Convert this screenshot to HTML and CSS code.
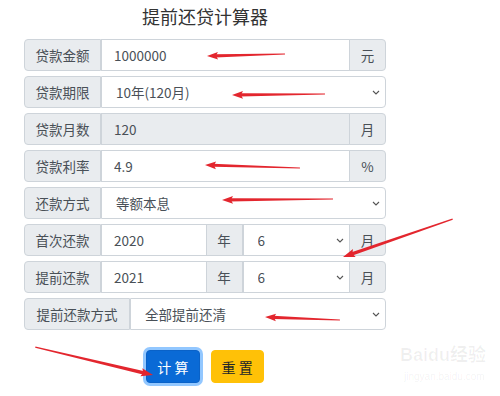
FILE: index.html
```html
<!DOCTYPE html>
<html lang="zh">
<head>
<meta charset="utf-8">
<title>提前还贷计算器</title>
<link rel="stylesheet" href="styles.css">
</head>
<body>
<div class="page">
  <h1 class="title">提前还贷计算器</h1>
  <form class="calc">
    <div class="group">
      <span class="addon label">贷款金额</span>
      <input class="control" value="1000000">
      <span class="addon unit">元</span>
    </div>
    <div class="group">
      <span class="addon label">贷款期限</span>
      <select class="control select"><option>10年(120月)</option></select>
    </div>
    <div class="group">
      <span class="addon label">贷款月数</span>
      <input class="control" value="120" disabled>
      <span class="addon unit">月</span>
    </div>
    <div class="group">
      <span class="addon label">贷款利率</span>
      <input class="control" value="4.9">
      <span class="addon unit">%</span>
    </div>
    <div class="group">
      <span class="addon label">还款方式</span>
      <select class="control select"><option>等额本息</option></select>
    </div>
    <div class="group">
      <span class="addon label">首次还款</span>
      <input class="control" value="2020">
      <span class="addon unit">年</span>
      <select class="control select"><option>6</option></select>
      <span class="addon unit">月</span>
    </div>
    <div class="group">
      <span class="addon label">提前还款</span>
      <input class="control" value="2021">
      <span class="addon unit">年</span>
      <select class="control select"><option>6</option></select>
      <span class="addon unit">月</span>
    </div>
    <div class="group">
      <span class="addon label wide">提前还款方式</span>
      <select class="control select"><option>全部提前还清</option></select>
    </div>
    <div class="actions">
      <button type="button" class="btn primary">计 算</button>
      <button type="button" class="btn warning">重 置</button>
    </div>
  </form>

  <div class="watermark">
    <div class="wm-logo">Baidu经验</div>
    <div class="wm-url">jingyan.baidu.com</div>
  </div>

  <svg class="marks" width="500" height="396" viewBox="0 0 500 396">
    <g fill="#e3262e">
      <g transform="translate(207 56) rotate(-1.47)">
        <polygon points="0,0 11,-3.8 9,0 11,3.8"/>
        <polygon points="8,-1.6 78,-0.5 78,0.5 8,1.6"/>
      </g>
      <g transform="translate(232 95) rotate(-0.6)">
        <polygon points="0,0 11,-3.8 9,0 11,3.8"/>
        <polygon points="8,-1.6 93,-0.5 93,0.5 8,1.6"/>
      </g>
      <g transform="translate(205 165) rotate(1.8)">
        <polygon points="0,0 11,-3.8 9,0 11,3.8"/>
        <polygon points="8,-1.6 95,-0.5 95,0.5 8,1.6"/>
      </g>
      <g transform="translate(222 200) rotate(-0.5)">
        <polygon points="0,0 11,-3.8 9,0 11,3.8"/>
        <polygon points="8,-1.6 111,-0.5 111,0.5 8,1.6"/>
      </g>
      <g transform="translate(343 257) rotate(-19.06)">
        <polygon points="0,0 12,-4.2 10,0 12,4.2"/>
        <polygon points="8,-1.8 116,-0.6 116,0.6 8,1.8"/>
      </g>
      <g transform="translate(265 317) rotate(2.3)">
        <polygon points="0,0 11,-3.8 9,0 11,3.8"/>
        <polygon points="8,-1.6 75,-0.5 75,0.5 8,1.6"/>
      </g>
      <g transform="translate(153 375) rotate(-166.65)">
        <polygon points="0,0 12,-4.2 10,0 12,4.2"/>
        <polygon points="8,-1.8 121,-0.6 121,0.6 8,1.8"/>
      </g>
    </g>
  </svg>
</div>
</body>
</html>
```

FILE: styles.css
```css
* {
  box-sizing: border-box;
}

body {
  margin: 0;
  background: #fff;
  font-family: "Noto Sans CJK SC", "Noto Sans", sans-serif;
  color: #495057;
}

.page {
  position: relative;
  width: 500px;
  height: 396px;
  overflow: hidden;
}

.title {
  margin: 0 0 0 24px;
  padding-top: 4px;
  width: 362px;
  text-align: center;
  font-size: 18px;
  font-weight: normal;
  line-height: 24px;
  color: #333;
}

.calc {
  width: 362px;
  margin: 11px 0 0 24px;
}

.group {
  display: flex;
  height: 32px;
  margin-bottom: 5px;
}

.group > * + * {
  margin-left: -1px;
}

.addon {
  display: flex;
  align-items: center;
  justify-content: center;
  flex: none;
  height: 32px;
  background: #e9ecef;
  border: 1px solid #ced4da;
  font-size: 13.5px;
  color: #495057;
  white-space: nowrap;
}

.label {
  width: 77px;
  border-radius: 4px 0 0 4px;
}

.label.wide {
  width: 106px;
}

.unit {
  width: 37px;
}

.group > :last-child {
  border-radius: 0 4px 4px 0;
}

.control {
  flex: 1;
  min-width: 0;
  height: 32px;
  margin: 0;
  padding: 0 12px;
  border: 1px solid #ced4da;
  background: #fff;
  font-family: inherit;
  font-size: 13.5px;
  color: #495057;
  outline: none;
}

.control:disabled {
  background: #e9ecef;
  color: #495057;
  opacity: 1;
}

.select {
  -webkit-appearance: none;
  appearance: none;
  padding-left: 14px;
  background: #fff url("data:image/svg+xml,%3Csvg xmlns='http://www.w3.org/2000/svg' width='8' height='5' viewBox='0 0 8 5'%3E%3Cpath d='M1 1l3 3 3-3' fill='none' stroke='%23555' stroke-width='1.1'/%3E%3C/svg%3E") no-repeat right 5px center;
}

.actions {
  display: flex;
  justify-content: center;
  gap: 11px;
  margin-top: 20px;
}

.btn {
  height: 33px;
  padding: 0 10px;
  border: 1px solid transparent;
  border-radius: 4px;
  font-family: inherit;
  font-size: 14px;
  line-height: 1;
  white-space: pre;
}

.primary {
  background: #0a6ad6;
  border-color: #0a62c8;
  color: #fff;
  box-shadow: 0 0 0 3px rgba(38, 143, 255, 0.5);
}

.warning {
  background: #ffc107;
  border-color: #ffc107;
  color: #212529;
}

.watermark {
  position: absolute;
  left: 400px;
  top: 344px;
  color: rgba(0, 0, 0, 0.06);
  font-family: "Liberation Sans", "Noto Sans CJK SC", sans-serif;
  white-space: nowrap;
}

.wm-logo {
  font-size: 18px;
  font-weight: bold;
  line-height: 22px;
}

.wm-url {
  font-size: 10px;
  line-height: 14px;
  margin-top: 4px;
  padding-left: 4px;
}

.marks {
  position: absolute;
  left: 0;
  top: 0;
  pointer-events: none;
}
```
